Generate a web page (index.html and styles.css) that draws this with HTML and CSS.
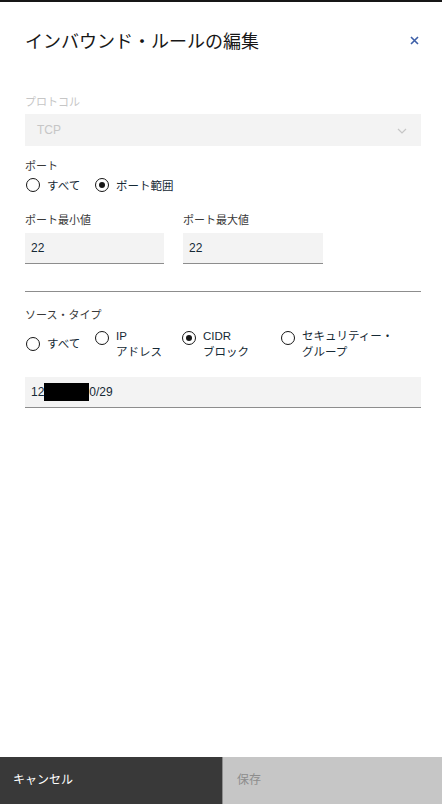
FILE: index.html
```html
<!DOCTYPE html>
<html lang="ja">
<head>
<meta charset="utf-8">
<title>インバウンド・ルールの編集</title>
<link rel="stylesheet" href="styles.css">
</head>
<body>
<div class="modal">
  <header class="header">
    <h1 class="title">インバウンド・ルールの編集</h1>
    <button class="close" aria-label="閉じる">
      <svg width="9" height="9" viewBox="0 0 9 9"><path d="M1 1L8 8M8 1L1 8" stroke="#3d5fa8" stroke-width="1.6" fill="none"/></svg>
    </button>
  </header>

  <main class="body">
    <div class="field">
      <div class="label disabled">プロトコル</div>
      <div class="select">
        <span>TCP</span>
        <svg class="chev" width="10" height="6" viewBox="0 0 10 6"><path d="M1 1L5 5L9 1" stroke="#c6c6c6" stroke-width="1.2" fill="none"/></svg>
      </div>
    </div>

    <div class="field port">
      <div class="label">ポート</div>
      <div class="radios">
        <label class="radio"><span class="circle"></span><span class="rtext">すべて</span></label>
        <label class="radio"><span class="circle checked"></span><span class="rtext">ポート範囲</span></label>
      </div>
    </div>

    <div class="range">
      <div class="field col">
        <div class="label">ポート最小値</div>
        <div class="input">22</div>
      </div>
      <div class="field col">
        <div class="label">ポート最大値</div>
        <div class="input">22</div>
      </div>
    </div>

    <hr class="divider">

    <div class="field">
      <div class="label">ソース・タイプ</div>
      <div class="radios source">
        <label class="radio center"><span class="circle"></span><span class="rtext">すべて</span></label>
        <label class="radio"><span class="circle"></span><span class="rtext">IP<br>アドレス</span></label>
        <label class="radio"><span class="circle checked"></span><span class="rtext">CIDR<br>ブロック</span></label>
        <label class="radio"><span class="circle"></span><span class="rtext">セキュリティー・<br>グループ</span></label>
      </div>
    </div>

    <div class="input wide">12<span class="redact"></span>0/29</div>
  </main>

  <footer class="footer">
    <button class="btn cancel">キャンセル</button>
    <button class="btn save">保存</button>
  </footer>
</div>
</body>
</html>
```

FILE: styles.css
```css
* { box-sizing: border-box; }
html, body { margin: 0; padding: 0; }
body {
  width: 442px;
  height: 804px;
  background: #ffffff;
  font-family: "Liberation Sans", "Noto Sans CJK JP", sans-serif;
  color: #171717;
  overflow: hidden;
}
.modal {
  height: 804px;
  display: flex;
  flex-direction: column;
  border-top: 2px solid #171717;
}
.header {
  display: flex;
  justify-content: space-between;
  align-items: center;
  padding: 26px 23px 0 25px;
  height: 50px;
}
.title {
  margin: 0;
  font-size: 18px;
  font-weight: 400;
  line-height: 24px;
  color: #171717;
  font-family: "Noto Sans CJK JP", sans-serif;
}
.close {
  border: 0;
  background: none;
  padding: 0;
  width: 9px;
  height: 9px;
  display: flex;
}
.body {
  flex: 1;
  padding: 41px 21px 0 25px;
  display: flex;
  flex-direction: column;
}
.field { display: flex; flex-direction: column; }
.label {
  font-family: "Noto Sans CJK JP", sans-serif;
  font-size: 11px;
  line-height: 16px;
  color: #393939;
}
.label.disabled { color: #c6c6c6; }
.select {
  margin-top: 5px;
  height: 32px;
  background: #f3f3f3;
  display: flex;
  align-items: center;
  justify-content: space-between;
  padding: 0 14px 0 12px;
  font-size: 12px;
  color: #c6c6c6;
}
.chev { margin-top: 1px; }
.port { margin-top: 11px; }
.radios {
  display: grid;
  grid-template-columns: 69px auto;
  margin-top: 2px;
  height: 20px;
  align-items: center;
}
.radios.source {
  grid-template-columns: 69px 87px 99px auto;
  margin-top: 6px;
  height: 32px;
  align-items: center;
}
.radio {
  display: flex;
  align-items: flex-start;
  gap: 7px;
  padding-left: 1px;
  font-family: "Noto Sans CJK JP", sans-serif;
  font-size: 11.5px;
  line-height: 16px;
  color: #152935;
}
.radios:not(.source) .radio { align-items: center; }
.radio.center { align-items: center; }
.circle {
  flex: none;
  width: 14px;
  height: 14px;
  border: 1.3px solid #161616;
  border-radius: 50%;
  margin-top: 3px;
  display: flex;
  align-items: center;
  justify-content: center;
}
.radio.center .circle, .radios:not(.source) .circle { margin-top: 0; }
.circle.checked::after {
  content: "";
  width: 6px;
  height: 6px;
  border-radius: 50%;
  background: #161616;
}
.source .rtext { font-family: "Liberation Sans", "Noto Sans CJK JP", sans-serif; }
.range {
  display: grid;
  grid-template-columns: 139px 140px;
  gap: 19px;
  margin-top: 16px;
}
.col .input { margin-top: 6px; }
.input {
  height: 31px;
  background: #f3f3f3;
  border-bottom: 1px solid #8d8d8d;
  display: flex;
  align-items: center;
  padding-left: 6px;
  font-size: 12px;
  color: #152935;
}
.divider {
  margin: 27px 0 0 0;
  border: 0;
  border-top: 1px solid #8d8d8d;
  height: 0;
}
.divider + .field { margin-top: 14px; }
.input.wide { margin-top: 17px; padding-left: 6px; }
.redact {
  display: inline-block;
  width: 45px;
  height: 18px;
  background: #000;
}
.footer {
  height: 47px;
  display: flex;
}
.btn {
  border: 0;
  margin: 0;
  font-family: "Noto Sans CJK JP", sans-serif;
  font-size: 12px;
  text-align: left;
  padding: 0 0 5px 13px;
  height: 47px;
}
.cancel {
  width: 223px;
  background: #393939;
  color: #ffffff;
  border-right: 1px solid #8d8d8d;
}
.save {
  flex: 1;
  background: #c6c6c6;
  color: #8d8d8d;
  padding-left: 14px;
}
```
